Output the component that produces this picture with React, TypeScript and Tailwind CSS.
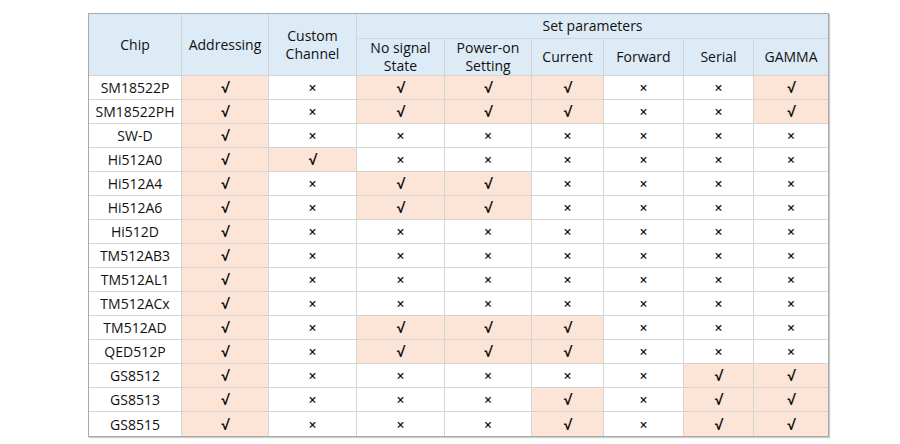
import React from 'react';

type Mark = 'y' | 'n';

interface ChipRow {
  chip: string;
  marks: Mark[];
}

// Addressing, Custom Channel, No signal, Power-on, Current, Forward, Serial, GAMMA
const rows: ChipRow[] = [
  { chip: 'SM18522P', marks: ['y', 'n', 'y', 'y', 'y', 'n', 'n', 'y'] },
  { chip: 'SM18522PH', marks: ['y', 'n', 'y', 'y', 'y', 'n', 'n', 'y'] },
  { chip: 'SW-D', marks: ['y', 'n', 'n', 'n', 'n', 'n', 'n', 'n'] },
  { chip: 'Hi512A0', marks: ['y', 'y', 'n', 'n', 'n', 'n', 'n', 'n'] },
  { chip: 'Hi512A4', marks: ['y', 'n', 'y', 'y', 'n', 'n', 'n', 'n'] },
  { chip: 'Hi512A6', marks: ['y', 'n', 'y', 'y', 'n', 'n', 'n', 'n'] },
  { chip: 'Hi512D', marks: ['y', 'n', 'n', 'n', 'n', 'n', 'n', 'n'] },
  { chip: 'TM512AB3', marks: ['y', 'n', 'n', 'n', 'n', 'n', 'n', 'n'] },
  { chip: 'TM512AL1', marks: ['y', 'n', 'n', 'n', 'n', 'n', 'n', 'n'] },
  { chip: 'TM512ACx', marks: ['y', 'n', 'n', 'n', 'n', 'n', 'n', 'n'] },
  { chip: 'TM512AD', marks: ['y', 'n', 'y', 'y', 'y', 'n', 'n', 'n'] },
  { chip: 'QED512P', marks: ['y', 'n', 'y', 'y', 'y', 'n', 'n', 'n'] },
  { chip: 'GS8512', marks: ['y', 'n', 'n', 'n', 'n', 'n', 'y', 'y'] },
  { chip: 'GS8513', marks: ['y', 'n', 'n', 'n', 'y', 'n', 'y', 'y'] },
  { chip: 'GS8515', marks: ['y', 'n', 'n', 'n', 'y', 'n', 'y', 'y'] },
];

const cell = 'flex items-center justify-center border-b border-r border-[#d4d4d4] text-center';
const head = `${cell} bg-[#ddebf7] leading-[18px]`;

const App: React.FC = () => {
  return (
    <div className="w-[900px] h-[444px] bg-white pt-[13px] pl-[88px] font-['Open_Sans',sans-serif] text-[14px] text-[#111]">
      <div className="w-[741px] border border-[#a8a8a8] shadow-[1px_1px_1px_rgba(0,0,0,0.2)]">
        <div className="grid grid-cols-[93px_87px_88px_88px_87px_72px_80px_70px_74px] grid-rows-[25px_37px] auto-rows-[24px]">
          {/* Header */}
          <div className={`${head} row-span-2`}>Chip</div>
          <div className={`${head} row-span-2`}>Addressing</div>
          <div className={`${head} row-span-2 flex-col`}>
            <span>Custom</span>
            <span>Channel</span>
          </div>
          <div className={`${head} col-span-6 border-r-0`}>Set parameters</div>
          <div className={`${head} flex-col`}>
            <span>No signal</span>
            <span>State</span>
          </div>
          <div className={`${head} flex-col`}>
            <span>Power-on</span>
            <span>Setting</span>
          </div>
          <div className={head}>Current</div>
          <div className={head}>Forward</div>
          <div className={head}>Serial</div>
          <div className={`${head} border-r-0`}>GAMMA</div>

          {/* Body */}
          {rows.map((row, r) => {
            const last = r === rows.length - 1;
            return (
              <React.Fragment key={row.chip}>
                <div className={`${cell} ${last ? 'border-b-0' : ''}`}>{row.chip}</div>
                {row.marks.map((m, c) => (
                  <div
                    key={c}
                    className={`${cell} ${last ? 'border-b-0' : ''} ${c === 7 ? 'border-r-0' : ''} ${
                      m === 'y' ? 'bg-[#fce4d6] font-bold' : 'bg-white font-semibold'
                    }`}
                  >
                    {m === 'y' ? '√' : '×'}
                  </div>
                ))}
              </React.Fragment>
            );
          })}
        </div>
      </div>
    </div>
  );
};

export default App;
